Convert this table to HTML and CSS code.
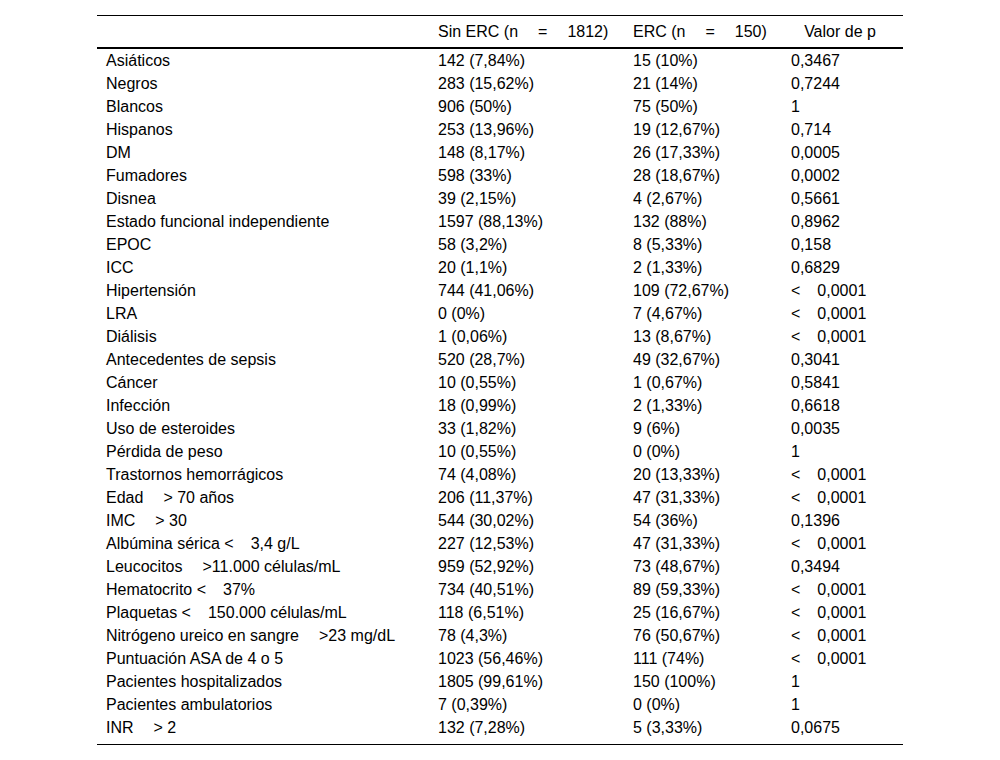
FILE: index.html
```html
<!DOCTYPE html>
<html lang="es">
<head>
<meta charset="utf-8">
<title>Tabla</title>
<link rel="stylesheet" href="styles.css">
</head>
<body>
<table class="data">
<thead>
<tr><th></th><th>Sin ERC (n<span class="g"></span>=<span class="g"></span>1812)</th><th>ERC (n<span class="g"></span>=<span class="g"></span>150)</th><th class="pv">Valor de p</th></tr>
</thead>
<tbody>
<tr><td>Asiáticos</td><td>142 (7,84%)</td><td>15 (10%)</td><td>0,3467</td></tr>
<tr><td>Negros</td><td>283 (15,62%)</td><td>21 (14%)</td><td>0,7244</td></tr>
<tr><td>Blancos</td><td>906 (50%)</td><td>75 (50%)</td><td>1</td></tr>
<tr><td>Hispanos</td><td>253 (13,96%)</td><td>19 (12,67%)</td><td>0,714</td></tr>
<tr><td>DM</td><td>148 (8,17%)</td><td>26 (17,33%)</td><td>0,0005</td></tr>
<tr><td>Fumadores</td><td>598 (33%)</td><td>28 (18,67%)</td><td>0,0002</td></tr>
<tr><td>Disnea</td><td>39 (2,15%)</td><td>4 (2,67%)</td><td>0,5661</td></tr>
<tr><td>Estado funcional independiente</td><td>1597 (88,13%)</td><td>132 (88%)</td><td>0,8962</td></tr>
<tr><td>EPOC</td><td>58 (3,2%)</td><td>8 (5,33%)</td><td>0,158</td></tr>
<tr><td>ICC</td><td>20 (1,1%)</td><td>2 (1,33%)</td><td>0,6829</td></tr>
<tr><td>Hipertensión</td><td>744 (41,06%)</td><td>109 (72,67%)</td><td>&lt;<span class="l"></span>0,0001</td></tr>
<tr><td>LRA</td><td>0 (0%)</td><td>7 (4,67%)</td><td>&lt;<span class="l"></span>0,0001</td></tr>
<tr><td>Diálisis</td><td>1 (0,06%)</td><td>13 (8,67%)</td><td>&lt;<span class="l"></span>0,0001</td></tr>
<tr><td>Antecedentes de sepsis</td><td>520 (28,7%)</td><td>49 (32,67%)</td><td>0,3041</td></tr>
<tr><td>Cáncer</td><td>10 (0,55%)</td><td>1 (0,67%)</td><td>0,5841</td></tr>
<tr><td>Infección</td><td>18 (0,99%)</td><td>2 (1,33%)</td><td>0,6618</td></tr>
<tr><td>Uso de esteroides</td><td>33 (1,82%)</td><td>9 (6%)</td><td>0,0035</td></tr>
<tr><td>Pérdida de peso</td><td>10 (0,55%)</td><td>0 (0%)</td><td>1</td></tr>
<tr><td>Trastornos hemorrágicos</td><td>74 (4,08%)</td><td>20 (13,33%)</td><td>&lt;<span class="l"></span>0,0001</td></tr>
<tr><td>Edad<span class="g"></span>&gt; 70 años</td><td>206 (11,37%)</td><td>47 (31,33%)</td><td>&lt;<span class="l"></span>0,0001</td></tr>
<tr><td>IMC<span class="g"></span>&gt; 30</td><td>544 (30,02%)</td><td>54 (36%)</td><td>0,1396</td></tr>
<tr><td>Albúmina sérica &lt;<span class="l"></span>3,4 g/L</td><td>227 (12,53%)</td><td>47 (31,33%)</td><td>&lt;<span class="l"></span>0,0001</td></tr>
<tr><td>Leucocitos<span class="g"></span>&gt;11.000 células/mL</td><td>959 (52,92%)</td><td>73 (48,67%)</td><td>0,3494</td></tr>
<tr><td>Hematocrito &lt;<span class="l"></span>37%</td><td>734 (40,51%)</td><td>89 (59,33%)</td><td>&lt;<span class="l"></span>0,0001</td></tr>
<tr><td>Plaquetas &lt;<span class="l"></span>150.000 células/mL</td><td>118 (6,51%)</td><td>25 (16,67%)</td><td>&lt;<span class="l"></span>0,0001</td></tr>
<tr><td>Nitrógeno ureico en sangre<span class="g"></span>&gt;23 mg/dL</td><td>78 (4,3%)</td><td>76 (50,67%)</td><td>&lt;<span class="l"></span>0,0001</td></tr>
<tr><td>Puntuación ASA de 4 o 5</td><td>1023 (56,46%)</td><td>111 (74%)</td><td>&lt;<span class="l"></span>0,0001</td></tr>
<tr><td>Pacientes hospitalizados</td><td>1805 (99,61%)</td><td>150 (100%)</td><td>1</td></tr>
<tr><td>Pacientes ambulatorios</td><td>7 (0,39%)</td><td>0 (0%)</td><td>1</td></tr>
<tr class="last"><td>INR<span class="g"></span>&gt; 2</td><td>132 (7,28%)</td><td>5 (3,33%)</td><td>0,0675</td></tr>
</tbody>
</table>
</body>
</html>
```

FILE: styles.css
```css
html, body {
  margin: 0;
  padding: 0;
  background: #fff;
}
body {
  font-family: "Liberation Sans", Arial, sans-serif;
  font-size: 16px;
  color: #000;
}
.data {
  margin: 15px 0 0 97px;
  width: 806px;
  border-collapse: collapse;
  table-layout: fixed;
  border-top: 1px solid #000;
  border-bottom: 1px solid #000;
}
.data th, .data td {
  text-align: left;
  font-weight: normal;
  white-space: nowrap;
}
.data th {
  height: 31px;
  padding: 0 0 0 8px;
  border-bottom: 2px solid #000;
  vertical-align: middle;
}
.data th:nth-child(1) { width: 324px; padding-left: 9px; }
.data th:nth-child(2) { width: 187px; }
.data th:nth-child(3) { width: 150px; }
.data th:nth-child(4) { width: 114px; }
.data th.pv {
  text-align: center;
  padding: 0 6px 0 0;
}
.data td {
  height: 23px;
  padding: 0 0 0 8px;
  line-height: 23px;
}
.data td:first-child { padding-left: 9px; }
.data tr.last td {
  padding-bottom: 5px;
}
.g {
  display: inline-block;
  width: 20px;
}
.l {
  display: inline-block;
  width: 17px;
}
```
